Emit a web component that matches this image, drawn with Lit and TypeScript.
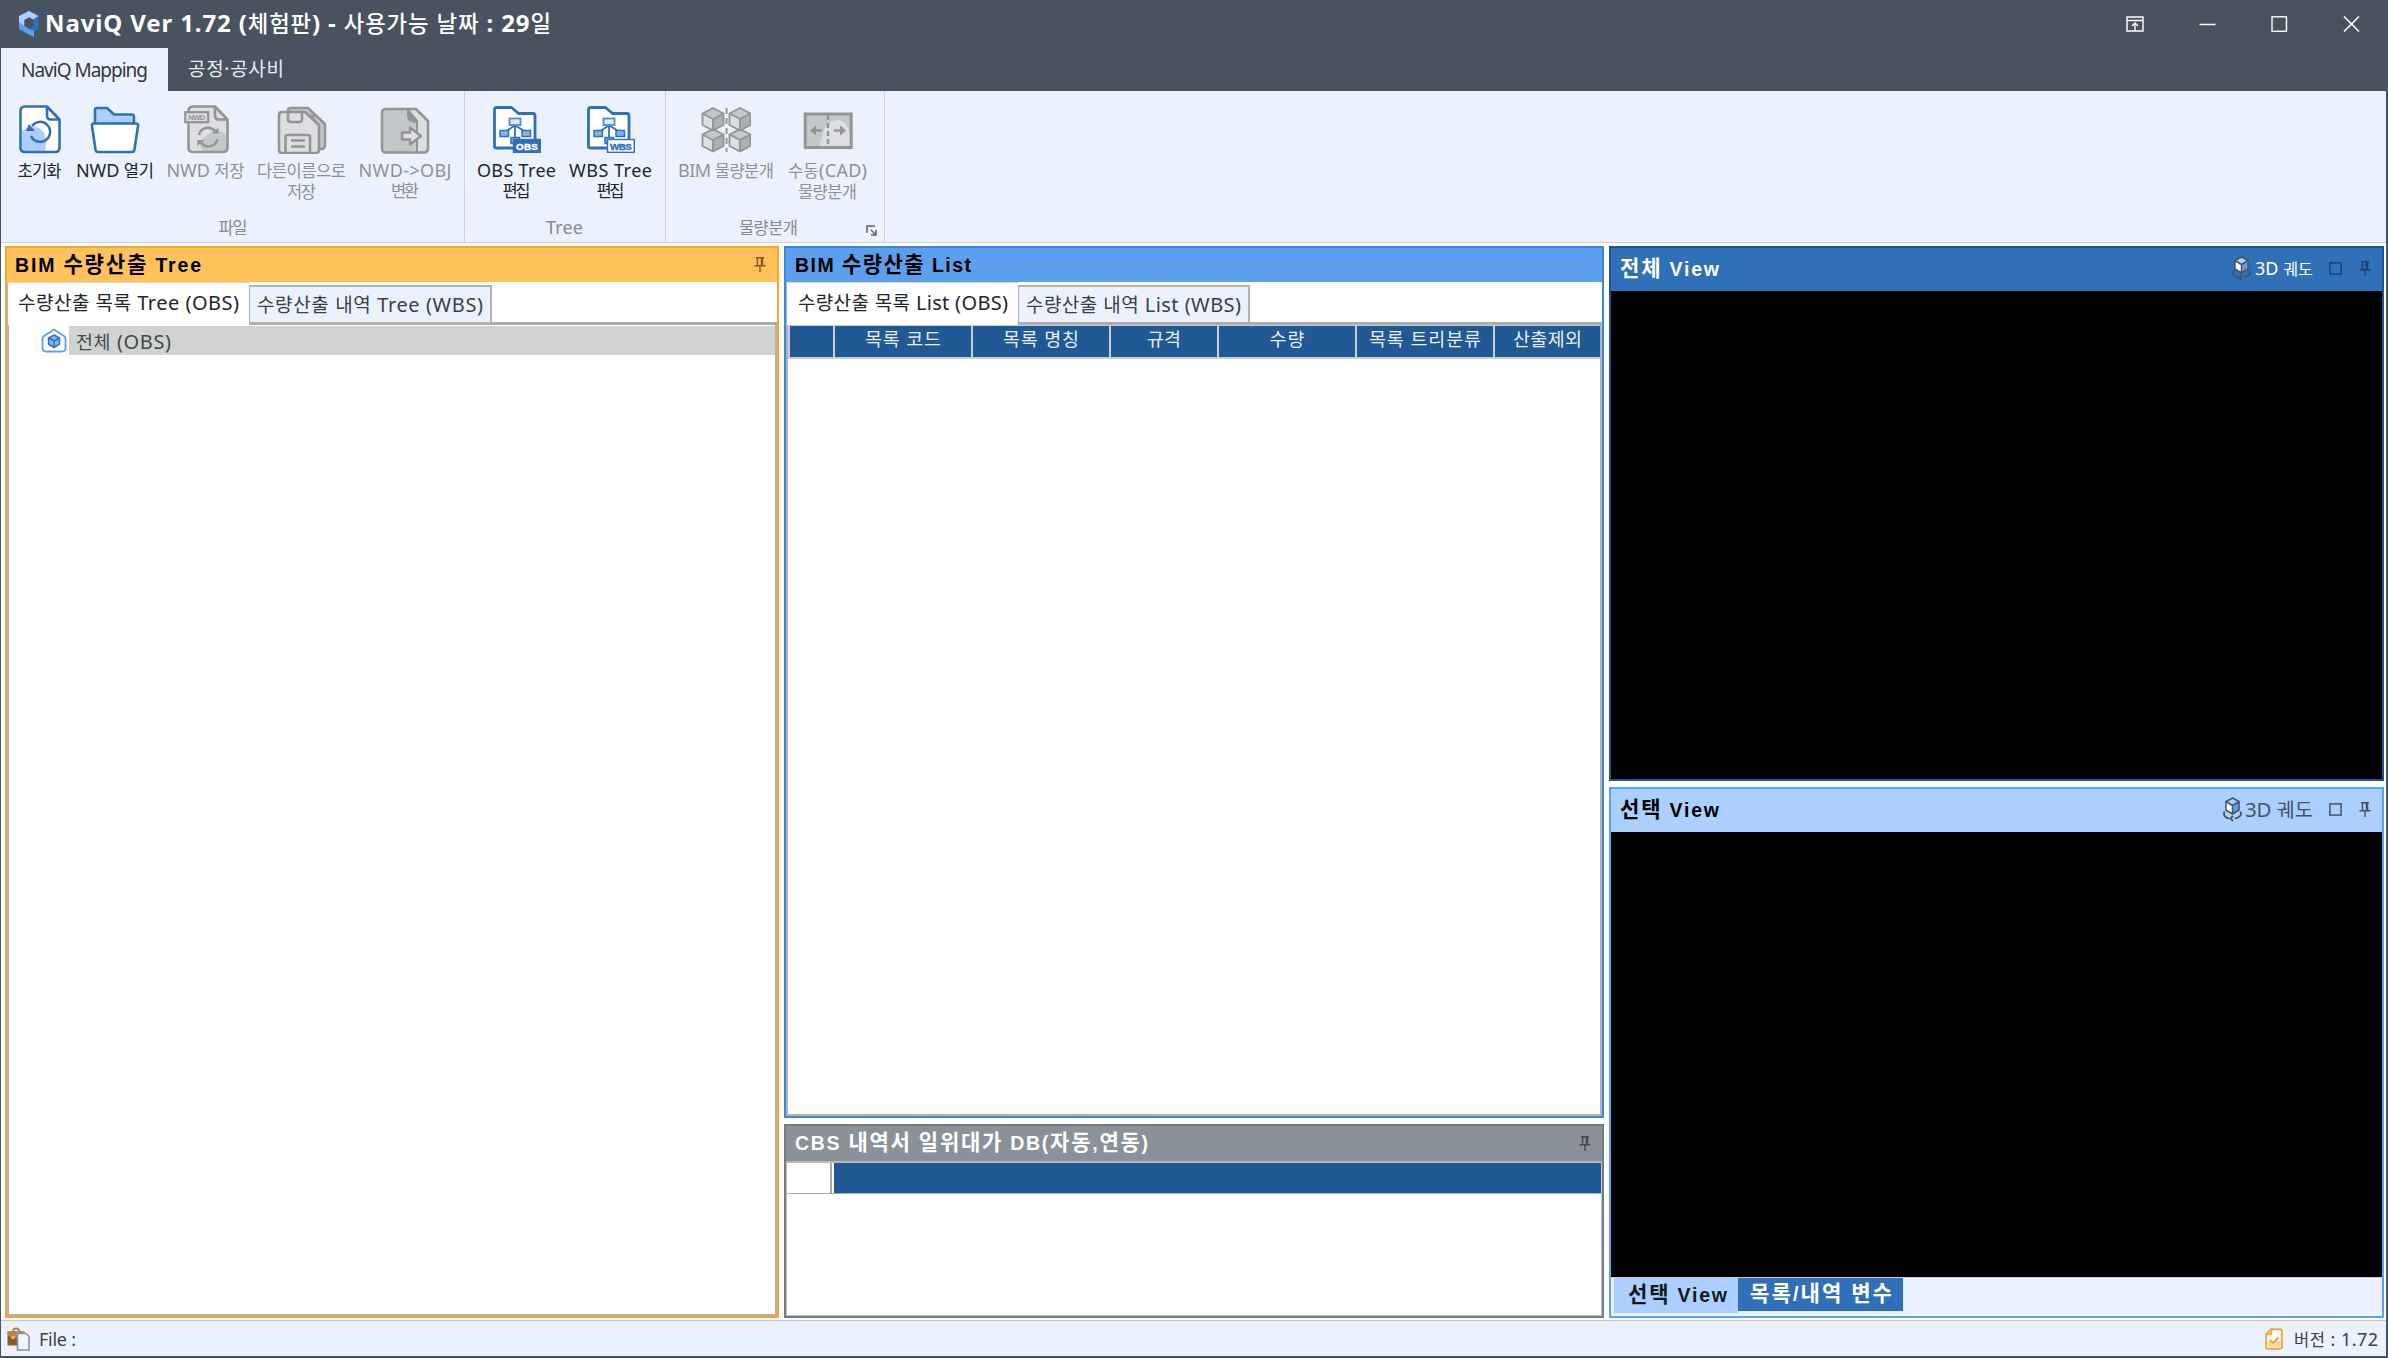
import { LitElement, html, svg, css, nothing } from "lit";
import { customElement, property } from "lit/decorators.js";

/* One line of text whose letter spacing is tuned to fill a given width. */
@customElement("fit-text")
class FitText extends LitElement {
  @property() text = "";
  @property({ type: Number }) w = 0;

  static styles = css`
    :host { display: block; white-space: pre; flex: none; }
    .run { display: inline-block; white-space: pre; }
    .ko { font-size: var(--ko, 0.92em); font-weight: var(--ko-weight, inherit); }
  `;

  render() {
    const parts = this.text.split(/([가-힣·]+)/).filter((p) => p);
    return html`<span class="run">${parts.map((p) => (/[가-힣·]/.test(p) ? html`<span class="ko">${p}</span>` : p))}</span>`;
  }

  updated() {
    this.style.width = this.w + "px";
    const run = this.renderRoot.querySelector(".run") as HTMLElement;
    run.style.letterSpacing = "0px";
    const natural = run.getBoundingClientRect().width;
    const n = Math.max(1, this.text.length - 1);
    run.style.letterSpacing = (this.w - natural) / n + "px";
  }
}

const t = (text: string, w: number, cls = "") => html`<fit-text class=${cls} .text=${text} .w=${w}></fit-text>`;

const BLUE = "#3070b8";
const GREY = "#939495";

const page = (stroke: string, fill: string, tint: string) => svg`
  <path d="M10 2.5H31L44.5 16V44Q44.5 48 40.5 48H10Q5.500 48 5.500 44V7Q5.500 2.500 10 2.500Z" fill=${fill}/>
  <path d="M7 27Q16 20 24 24Q34 30 30 47H7Z" fill=${tint}/>
  <path d="M10 2.500H32L44.500 15.500V43.500Q44.500 48 40 48H10Q5.500 48 5.500 43.500V7Q5.500 2.500 10 2.500ZM32 3V11.500Q32 15.500 36 15.500H44" fill="none" stroke=${stroke} stroke-width="2.600" stroke-linejoin="round"/>`;

const icons: Record<string, unknown> = {
  reset: svg`${page(BLUE, "#fff", "#abd0ff")}
    <path d="M17 22A10 10 0 1 1 16 32" fill="none" stroke=${BLUE} stroke-width="2.500"/>
    <path d="M11 27L14 20L20 27Z" fill=${BLUE}/>`,
  open: svg`<path d="M5 20V6Q5 4 7 4H17L24 10.500H42Q44 10.500 44 13V20Z" fill="#abd0ff" stroke=${BLUE} stroke-width="2.600" stroke-linejoin="round"/>
    <path d="M4 19.500H46Q48.500 19.500 48 22L44.500 45.500Q44 48 42 48H8Q6 48 5.500 45.500L2 22Q1.500 19.500 4 19.500Z" fill="#fff" stroke=${BLUE} stroke-width="2.600"/>`,
  nwd: svg`<g transform="translate(2 0)"><path d="M10 2.500H31L44 16V44Q44 48 40 48H10Q6 48 6 44V7Q6 2.500 10 2.500Z" fill="#dcdee1"/>
    <path d="M30 27Q42 25 43 34V47H28Q14 48 18 36Z" fill="#c4c7ca"/>
    <path d="M10 2.500H32L44.500 15.500V43.500Q44.500 48 40 48H10Q5.500 48 5.500 43.500V7Q5.500 2.500 10 2.500ZM32 3V11.500Q32 15.500 36 15.500H44" fill="none" stroke=${GREY} stroke-width="2.600" stroke-linejoin="round"/></g>
    <path d="M18 31A9.200 9.200 0 0 1 34 27M36.500 35A9.200 9.200 0 0 1 20 38.500" fill="none" stroke=${GREY} stroke-width="2.400"/>
    <path d="M30.500 29.500H37.500V23.500ZM23.500 36H16.500V42Z" fill=${GREY}/>
    <rect x="4.200" y="8.200" width="23" height="10" fill="#dcdee1" stroke=${GREY} stroke-width="2.200"/>
    <text class="tiny" x="15.700" y="15.800" fill=${GREY} textLength="17">NWD</text>`,
  saveas: svg`<path d="M11 5.500Q11 4 14 4H31L48 20V41Q48 45 44 45H36V12H11Z" fill="#c4c7ca" stroke=${GREY} stroke-width="2.500" stroke-linejoin="round"/>
    <path d="M5 8H28L42 21V46Q42 49 39 49H5Q2 49 2 46V11Q2 8 5 8Z" fill="#dcdee1" stroke=${GREY} stroke-width="2.600" stroke-linejoin="round"/>
    <path d="M11 8.500V15Q11 18 14 18H22Q25 18 25 15V8.500M8.500 48V33Q8.500 31 10.500 31H31Q33 31 33 33V48M14 36.500H28M14 42.500H28" fill="none" stroke=${GREY} stroke-width="2.600"/>`,
  convert: svg`<path d="M5 5H36L48 17V44Q48 48.500 44 48.500H6Q2 48.500 2 44V9Q2 5 5 5Z" fill="#dcdee1"/>
    <path d="M5 5H27V14L37 19V48H6Q2 48.500 2 44V9Q2 5 5 5Z" fill="#c4c7ca"/>
    <path d="M27 5L37 17L38 19Q27 19 27 12Z" fill=${GREY}/>
    <path d="M37 18V48M27 5L38 18" stroke=${GREY} stroke-width="2"/>
    <path d="M6 5H36L48 17V44Q48 48.500 44 48.500H6Q2 48.500 2 44V9Q2 5 6 5Z" fill="none" stroke=${GREY} stroke-width="2.600" stroke-linejoin="round"/>
    <path d="M22 28.500H30V23.500L41 32L30 40.500V35.500H22Z" fill="#dcdee1" stroke=${GREY} stroke-width="2.400" stroke-linejoin="round"/>`,
  obs: tree("OBS", BLUE, "#fff"),
  wbs: tree("WBS", "#fff", BLUE),
  bim: svg`${cube(12, 25)}${cube(39, 25)}${cube(12, 4)}${cube(39, 4)}
    <path d="M25.500 4V48" stroke=${GREY} stroke-width="2" stroke-dasharray="6 4"/>`,
  cad: svg`<rect x="2.200" y="10" width="46" height="33.500" fill="#c4c7ca"/>
    <path d="M17 43Q20 15 36 16Q48 18 48 43Z" fill="#dcdee1"/>
    <rect x="2.200" y="10" width="46" height="33.500" fill="none" stroke=${GREY} stroke-width="3"/>
    <path d="M25 11V43" stroke=${GREY} stroke-width="2.400" stroke-dasharray="5 3"/>
    <path d="M19 26.500H10M31 26.500H40" stroke=${GREY} stroke-width="2.400"/>
    <path d="M7 26.500L13 21.500V31.500ZM43 26.500L37 21.500V31.500Z" fill=${GREY}/>`,
};

function tree(label: string, bg: string, fg: string) {
  return svg`<path d="M2.500 43V6Q2.500 3.500 5 3.500H19.500L26.500 9.500H41Q43 9.500 43 12V44H5Q2.500 44 2.500 43Z" fill="#fff" stroke=${BLUE} stroke-width="2.800" stroke-linejoin="round"/>
    <path d="M23 21V33M22 22L13 28M24 22L34 28" stroke=${BLUE} stroke-width="1.800"/>
    <rect x="17.500" y="14.500" width="11" height="6.500" fill="#e6f0ff" stroke="#4b8bd6" stroke-width="1.800"/>
    <rect x="8" y="26.500" width="8.500" height="6" fill="#7fb4f3" stroke=${BLUE} stroke-width="1.500"/>
    <rect x="30" y="26.500" width="8.500" height="6" fill="#7fb4f3" stroke=${BLUE} stroke-width="1.500"/>
    <rect x="19" y="33.500" width="8.500" height="6" fill="#7fb4f3" stroke=${BLUE} stroke-width="1.500"/>
    <rect x="21.500" y="35.500" width="26.800" height="12.800" fill=${bg} stroke=${BLUE} stroke-width="1.400"/>
    <text class="badge" x="34.900" y="45.600" fill=${fg} stroke=${fg} textLength="22">${label}</text>`;
}

function cube(x: number, y: number) {
  return svg`<path d="M${x} ${y}L${x + 10.5} ${y + 5.5}V${y + 17}L${x} ${y + 22.5}L${x - 10.5} ${y + 17}V${y + 5.5}Z" fill="#dcdee1"/>
    <path d="M${x} ${y}L${x + 10.5} ${y + 5.5}L${x} ${y + 11}L${x - 10.5} ${y + 5.5}Z" fill="#c4c7ca"/>
    <path d="M${x} ${y + 11}L${x + 10.5} ${y + 5.5}V${y + 17}L${x} ${y + 22.5}Z" fill="#aeb1b4"/>
    <path d="M${x} ${y}L${x + 10.5} ${y + 5.5}V${y + 17}L${x} ${y + 22.5}L${x - 10.5} ${y + 17}V${y + 5.5}ZM${x - 10.5} ${y + 5.5}L${x} ${y + 11}L${x + 10.5} ${y + 5.5}M${x} ${y + 11}V${y + 22.5}" fill="none" stroke=${GREY} stroke-width="1.900" stroke-linejoin="round"/>`;
}

const icon = (name: string) => html`<svg class="big" width="50" height="50" viewBox="0 0 50 50">${icons[name]}</svg>`;

const pin = html`<svg class="pin" width="12" height="15" viewBox="0 0 12 15">
  <path d="M2 .800H10M3.500 1V8M8.500 1V8M7.500 1V8M.500 8.700H11.500M6 9V15" fill="none" stroke="currentColor" stroke-width="1.500"/></svg>`;
const square = html`<svg class="sq" width="13" height="13" viewBox="0 0 13 13">
  <rect x=".900" y=".900" width="11.200" height="11.200" fill="none" stroke="currentColor" stroke-width="1.500"/></svg>`;
const orbit = html`<svg class="orbit" width="19" height="25" viewBox="0 0 19 25">
  <path d="M9.500 1L16 4.500V13L9.500 17L3 13V4.500Z" fill="#fff"/>
  <path d="M9.500 1L16 4.500L9.500 8.500L3 4.500Z" fill="#abd0ff"/>
  <path d="M9.500 8.500L16 4.500V13L9.500 17Z" fill="#5c9fec"/>
  <path d="M9.500 1L16 4.500V13L9.500 17L3 13V4.500ZM3 4.500L9.500 8.500L16 4.500M9.500 8.500V17" fill="none" stroke="#48535f" stroke-width="1.500"/>
  <path d="M1.500 14.500Q-.500 20 6 21.500M17.500 14.500Q19.500 20 12 21.500M10 19L7.500 21.500L10 24" fill="none" stroke="#48535f" stroke-width="1.800"/></svg>`;

interface Cmd { icon: string; w: number; lines: [string, number][]; off?: boolean }
interface Group { label: string; lw: number; cls: string; cmds: Cmd[]; launcher?: boolean }

const groups: Group[] = [
  { label: "파일", lw: 29, cls: "g1", cmds: [
    { icon: "reset", w: 63, lines: [["초기화", 44]] },
    { icon: "open", w: 88, lines: [["NWD 열기", 78]] },
    { icon: "nwd", w: 93, off: true, lines: [["NWD 저장", 78]] },
    { icon: "saveas", w: 99, off: true, lines: [["다른이름으로", 89], ["저장", 29]] },
    { icon: "convert", w: 108, off: true, lines: [["NWD->OBJ", 93], ["변환", 28]] },
  ] },
  { label: "Tree", lw: 37, cls: "g2", cmds: [
    { icon: "obs", w: 93, lines: [["OBS Tree", 79], ["편집", 28]] },
    { icon: "wbs", w: 95, lines: [["WBS Tree", 83], ["편집", 28]] },
  ] },
  { label: "물량분개", lw: 59, cls: "g3", launcher: true, cmds: [
    { icon: "bim", w: 110, off: true, lines: [["BIM 물량분개", 96]] },
    { icon: "cad", w: 93, off: true, lines: [["수동(CAD)", 79], ["물량분개", 59]] },
  ] },
];

const columns: [string, number][] = [
  ["", 0], ["목록 코드", 76], ["목록 명칭", 76], ["규격", 34], ["수량", 35], ["목록 트리분류", 112], ["산출제외", 69],
];

@customElement("app-root")
class AppRoot extends LitElement {
  static styles = css`
    :host { display: block; width: 2388px; height: 1358px; overflow: hidden; }
    * { box-sizing: border-box; }
    svg { display: block; flex: none; }
    .win { height: 1358px; display: flex; flex-direction: column; background: #48535f; padding: 0 2px 2px 1px;
      font-family: "Noto Sans", "Noto Sans CJK KR", sans-serif; font-size: 19px; color: #22262b; }

    .titlebar { height: 48px; flex: none; display: flex; align-items: center; padding: 0 26px 0 18px; color: #fff; }
    .caption { font-size: 24px; font-weight: 700; line-height: 32px; margin-left: 6px; margin-bottom: 1px; --ko: 0.93em; --ko-weight: 500; }
    .sysbtns { margin-left: auto; display: flex; align-items: center; gap: 55px; }

    .menutabs { height: 43px; flex: none; display: flex; align-items: stretch; }
    .mtab { display: flex; align-items: center; padding: 0 20px; line-height: 24px; color: #e9edf2; --ko: 1em; }
    .mtab:not(.on) { padding-bottom: 2px; }
    .mtab.on { background: #ebf2fe; color: #33383e; }

    .ribbon { height: 152px; flex: none; display: flex; background: #ebf2fe; border-bottom: 1px solid #cdd1d6; }
    .group { display: flex; flex-direction: column; border-right: 1px solid #cfd1d6; padding-top: 13px; }
    .g1 { width: 464px; padding-left: 7px; }
    .g2 { width: 201px; padding-left: 5px; }
    .g3 { width: 219px; padding-left: 5px; }
    .cmds { display: flex; height: 112px; }
    .cmd { display: flex; flex-direction: column; align-items: center; font-size: 18px; line-height: 20px; --ko: 0.92em; }
    .cmd .big { margin-bottom: 6px; }
    .cmd.off { color: #8d9094; }
    .big text { font-family: "Liberation Sans", sans-serif; font-weight: 700; text-anchor: middle; }
    .tiny { font-size: 7.500px; }
    .badge { font-size: 9.800px; stroke-width: 0.4px; }
    .grouplabel { display: flex; justify-content: center; position: relative; padding-right: 6px; font-size: 18px; line-height: 22px; color: #85898e; --ko: 0.92em; }
    .g3 .grouplabel { padding-right: 18px; }
    .launcher { position: absolute; right: 7px; top: 9px; }

    .main { flex: 1; min-height: 0; display: grid; grid-template-columns: 774px 820px 775px; column-gap: 5px; padding: 3px 2px 2px 4px; background: #fff; }
    .stack { display: flex; flex-direction: column; gap: 6px; min-height: 0; }
    .panel { display: flex; flex-direction: column; border: 2px solid; background: #fff; min-height: 0; }
    .orange { border-color: #f9a62b; }
    .sky { border-color: #3c87e0; }
    .slate { border-color: #757b81; }
    .navy { border-color: #1f5590; }
    .light { border-color: #5aa2f4; background: #ebf2fe; }
    .head { flex: none; display: flex; align-items: center; height: 34px; padding: 0 11px 1px 9px; color: #000; font-weight: 700;
      font-size: 19.500px; line-height: 24px; font-family: "Liberation Sans", "Noto Sans CJK KR", sans-serif; --ko: 1.08em; }
    .head .pin { margin-left: auto; }
    .orange .head { background: #ffc15a; padding-left: 8px; }
    .orange .pin { color: #8a5a2c; }
    .sky .head { background: #5c9fec; }
    .slate .head { background: #8a9198; color: #fff; height: 35px; }
    .slate .pin { color: #48494f; }
    .navy .head { background: #3070b8; color: #fff; height: 43px; padding-bottom: 2px; }
    .light .head { background: #abd0ff; height: 43px; padding-bottom: 2px; }
    .tools { margin-left: auto; display: flex; align-items: center; font-family: "Noto Sans", "Noto Sans CJK KR", sans-serif; font-weight: 400; --ko: 0.9em; }
    .tools .label { margin-left: 4px; font-size: 20px; }
    .tools .sq { margin: 0 17px 0 16px; }
    .navy .tools { color: #1c416f; }
    .navy .label { color: #fff; font-size: 18px; }
    .light .tools { color: #48535f; --ko: 0.97em; }
    .light .label { font-size: 20.500px; margin-left: 3px; }

    .tabs { flex: none; display: flex; align-items: flex-end; height: 43px; border-bottom: 3px solid #adadad; }
    .tab { height: 37px; display: flex; align-items: center; border: 2px solid #b4b4b6; border-left-width: 1px; border-bottom: 0; background: #ebf2fe; font-size: 20px; line-height: 26px; color: #3c4046; padding-left: 7px; --ko: 0.95em; }
    .tab.on { height: 43px; margin-bottom: -3px; padding: 0 0 3px 11px; background: #fff; color: #22262b; border: 0; border-left: 1px solid #b4b4b6; border-top: 1px solid #d8d8da; }
    .orange .tab { width: 243px; }
    .orange .tab.on { width: 242px; padding-left: 10px; }
    .sky .tab { width: 232px; }
    .body { flex: 1; border: 2px solid #b3b3b5; border-top: 0; min-height: 0; }

    .node { display: flex; height: 29px; margin-top: 1px; align-items: center; padding-left: 32px; }
    .nodelabel { margin-left: 2px; flex: 1; height: 29px; background: #d1d3d3; padding-left: 7px; font-size: 20px; line-height: 31px; color: #44484d; --ko: 0.92em; }

    .thead { display: grid; grid-template-columns: 43px 136px 136px 106px 136px 136px 1fr; column-gap: 2px; padding: 1px 0 2px 2px; background: #cbcdd0; }
    .th { height: 31px; background: #215896; color: #e8eef5; display: flex; justify-content: center; font-size: 19px; line-height: 26px; --ko: 0.97em; }
    .cbs .body { border: 1px solid #c0c2c4; border-top: 2px solid #b7b9bb; }
    .cbsrow { display: grid; grid-template-columns: 45px 1fr; height: 31px; border-bottom: 1px solid #a9abad; }
    .cbsrow .blank { border-right: 2px solid #a9a9ab; }
    .cbsrow .fill { background: #215896; margin-left: 2px; }

    .canvas { flex: 1; background: #000; }
    .vtabs { height: 39px; flex: none; display: flex; align-items: flex-start; padding: 0 3px; background: #ebf2fe; border-top: 1px solid #c9ccd2;
      font-family: "Liberation Sans", "Noto Sans CJK KR", sans-serif; font-weight: 700; --ko: 1.08em; line-height: 33px; font-size: 19.500px; }
    .vtab { height: 33px; width: 165px; padding-left: 12px; background: #3070b8; color: #fff; line-height: 32px; }
    .vtab.on { height: 35px; width: 124px; padding-left: 14px; background: #abd0ff; color: #111820; line-height: 34px; }

    .status { height: 36px; flex: none; display: flex; align-items: center; background: #ebf2fe; border-top: 1px solid #c3c7cc; padding: 1px 8px 0 6px; line-height: 24px; font-size: 18px; color: #3b4147; --ko: 0.92em; }
    .file { margin-left: 9px; }
    .ver { margin-left: auto; margin-right: 11px; }
  `;

  private cmd(c: Cmd) {
    return html`<div class="cmd ${c.off ? "off" : ""}" style="width:${c.w}px">${icon(c.icon)}${c.lines.map(([s, w]) => t(s, w))}</div>`;
  }

  private viewTools(w: number) {
    return html`<div class="tools">${orbit}${t("3D 궤도", w, "label")}${square}${pin}</div>`;
  }

  render() {
    return html`<div class="win">
      <div class="titlebar">
        <svg width="20" height="26" viewBox="0 0 20 26">
          <path d="M10 0L19.500 5V18L15 21V26L10 23.500L0 18V5Z" fill="#3070b8"/>
          <path d="M0 5L10 0L19.500 5L14 8.500L10 6.500L5.500 9V15L0 18Z" fill="#abd0ff"/>
          <path d="M0 11V18L10 23.500L15 26V20L10 18L5.500 15Z" fill="#5c9fec"/>
          <path d="M10 6.500L14.500 9V15L10 17.500L5.500 15V9Z" fill="#48535f"/>
        </svg>
        ${t("NaviQ Ver 1.72 (체험판) - 사용가능 날짜 : 29일", 506, "caption")}
        <div class="sysbtns">
          <svg width="18" height="16" viewBox="0 0 18 16"><path d="M1 1H17V15H1ZM1 4.500H17M9 15V7.500M6 10L9 7L12 10" fill="none" stroke="#fff" stroke-width="1.400"/></svg>
          <svg width="17" height="16" viewBox="0 0 17 16"><path d="M.500 8.500H16.500" stroke="#fff" stroke-width="1.500"/></svg>
          <svg width="17" height="16" viewBox="0 0 17 16"><rect x="1" y=".800" width="14.500" height="14.500" fill="none" stroke="#fff" stroke-width="1.400"/></svg>
          <svg width="17" height="16" viewBox="0 0 17 16"><path d="M1 .500L16 15.500M16 .500L1 15.500" stroke="#fff" stroke-width="1.500"/></svg>
        </div>
      </div>

      <div class="menutabs">
        <div class="mtab on">${t("NaviQ Mapping", 127)}</div>
        <div class="mtab">${t("공정·공사비", 96)}</div>
      </div>

      <div class="ribbon">
        ${groups.map((g) => html`<div class="group ${g.cls}">
          <div class="cmds">${g.cmds.map((c) => this.cmd(c))}</div>
          <div class="grouplabel">${t(g.label, g.lw)}${g.launcher
            ? html`<svg class="launcher" width="11" height="11" viewBox="0 0 11 11"><path d="M1 8V1H9M5 5L9 9M10 5V10H5" fill="none" stroke="#5d6268" stroke-width="1.500"/></svg>` : nothing}</div>
        </div>`)}
      </div>

      <div class="main">
        <div class="panel orange">
          <div class="head">${t("BIM 수량산출 Tree", 186)}${pin}</div>
          <div class="tabs">
            <div class="tab on">${t("수량산출 목록 Tree (OBS)", 221)}</div>
            <div class="tab">${t("수량산출 내역 Tree (WBS)", 226)}</div>
          </div>
          <div class="body">
            <div class="node">
              <svg width="26" height="25" viewBox="0 0 26 25">
                <path d="M13 1.500L23 8Q24.500 9 24.500 11V20Q24.500 23.500 21 23.500H5Q1.500 23.500 1.500 20V11Q1.500 9 3 8Z" fill="#fff" stroke="#5c9fec" stroke-width="1.800"/>
                <path d="M13 7L18.500 10V16L13 19.500L7.500 16V10Z" fill="#7fb4f3" stroke="#3070b8" stroke-width="1.500"/>
                <path d="M7.500 10L13 13L18.500 10M13 13V19" fill="none" stroke="#3070b8" stroke-width="1.500"/>
              </svg>
              <div class="nodelabel">${t("전체 (OBS)", 95)}</div>
            </div>
          </div>
        </div>

        <div class="stack">
          <div class="panel sky" style="height:872px">
            <div class="head">${t("BIM 수량산출 List", 176)}</div>
            <div class="tabs">
              <div class="tab on">${t("수량산출 목록 List (OBS)", 210)}</div>
              <div class="tab">${t("수량산출 내역 List (WBS)", 215)}</div>
            </div>
            <div class="body">
              <div class="thead">${columns.map(([s, w]) => html`<div class="th">${s ? t(s, w) : nothing}</div>`)}</div>
            </div>
          </div>
          <div class="panel slate cbs" style="height:194px">
            <div class="head">${t("CBS 내역서 일위대가 DB(자동,연동)", 353)}${pin}</div>
            <div class="body"><div class="cbsrow"><div class="blank"></div><div class="fill"></div></div></div>
          </div>
        </div>

        <div class="stack">
          <div class="panel navy" style="height:535px">
            <div class="head">${t("전체 View", 99)}${this.viewTools(58)}</div>
            <div class="canvas"></div>
          </div>
          <div class="panel light" style="height:531px">
            <div class="head">${t("선택 View", 99)}${this.viewTools(68)}</div>
            <div class="canvas"></div>
            <div class="vtabs">
              <div class="vtab on">${t("선택 View", 99)}</div>
              <div class="vtab">${t("목록/내역 변수", 142)}</div>
            </div>
          </div>
        </div>
      </div>

      <div class="status">
        <svg width="23" height="24" viewBox="0 0 23 24">
          <path d="M6 5Q6 1.500 9 1.500Q12.500 1.500 12.500 5" fill="none" stroke="#a98058" stroke-width="1.800"/>
          <rect x=".500" y="4.500" width="17" height="14" fill="#8c5a2c"/>
          <path d="M.500 4.500H17.500V8L12 11H5L.500 8Z" fill="#b98552"/>
          <rect x="4.500" y="9" width="3" height="3" fill="#f3c13a"/>
          <path d="M10.500 6.500H19L22 9.500V23H10.500Z" fill="#f3f6fa" stroke="#7f93ad" stroke-width="1.600"/>
        </svg>
        ${t("File :", 37, "file")}
        <svg class="ver" width="18" height="22" viewBox="0 0 18 22">
          <path d="M6 1.200H15Q16.800 1.200 16.800 3V19Q16.800 20.800 15 20.800H3Q1.200 20.800 1.200 19V6Z" fill="#fff" stroke="#f3a63a" stroke-width="2"/>
          <path d="M3 13H15V19H3Z" fill="#ffd999"/><path d="M1.500 6.500H6.500V1.500" fill="#ffc15a" stroke="#f3a63a" stroke-width="1.500"/>
          <path d="M5 12L8 15L13.500 9.500" fill="none" stroke="#f3a63a" stroke-width="2.200"/>
        </svg>
        ${t("버전 : 1.72", 84)}
      </div>
    </div>`;
  }
}
